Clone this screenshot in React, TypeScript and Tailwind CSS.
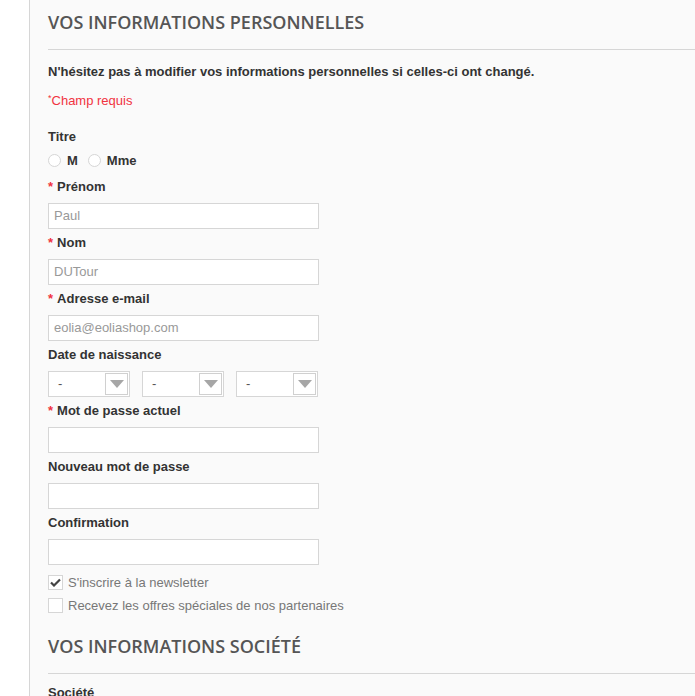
import React from "react";

const sans = { fontFamily: '"Liberation Sans", Arial, sans-serif' };

function Label({ text, required }: { text: string; required?: boolean }) {
  return (
    <div className="h-[18px] leading-[20px] text-[13px] font-bold text-[#333]">
      {required && <span className="text-[#f13340] mr-[4px]">*</span>}
      {text}
    </div>
  );
}

function Field({ label, required, value, first }: { label: string; required?: boolean; value?: string; first?: boolean }) {
  return (
    <div className={first ? "mt-[8px]" : "mt-[4px]"}>
      <Label text={label} required={required} />
      <div className="mt-[8px] h-[26px] w-[271px] border border-[#d6d6d6] bg-white pl-[5px] text-[13px] leading-[24px] text-[#999]">
        {value}
      </div>
    </div>
  );
}

function Select() {
  return (
    <div className="flex h-[26px] w-[82px] items-center justify-between border border-[#d6d6d6] bg-white pl-[9px] pr-[1px]">
      <span className="text-[13px] text-[#555]">-</span>
      <div className="flex h-[22px] w-[23px] items-center justify-center border border-[#d0d0d0] bg-white">
        <svg width="14" height="8" viewBox="0 0 14 8">
          <path d="M0 0h14L7 8z" fill="#a6a6a6" />
        </svg>
      </div>
    </div>
  );
}

function Radio({ label }: { label: string }) {
  return (
    <div className="flex items-center">
      <span className="h-[13px] w-[13px] rounded-full border border-[#d6d6d6] bg-white" />
      <span className="ml-[6px] text-[13px] font-bold text-[#333]">{label}</span>
    </div>
  );
}

function Check({ label, checked }: { label: string; checked?: boolean }) {
  return (
    <div className="flex h-[23px] items-center">
      <span className="flex h-[15px] w-[15px] items-center justify-center border border-[#d6d6d6] bg-white">
        {checked && (
          <svg width="11" height="9" viewBox="0 0 11 9">
            <path d="M1 4.5l3 3L10 1.5" stroke="#444" strokeWidth="2.2" fill="none" />
          </svg>
        )}
      </span>
      <span className="ml-[5px] text-[13px] text-[#777]">{label}</span>
    </div>
  );
}

export default function App() {
  return (
    <div className="flex h-[696px] w-[695px] overflow-hidden bg-white" style={sans}>
      <div className="w-[29px] shrink-0 bg-white" />
      <div className="flex-1 border-l border-[#d6d6d6] bg-[#fafafa]">
        <h1
          className="ml-[18px] pt-[10px] text-[18px] leading-[24px] font-semibold uppercase text-[#555]"
          style={{ fontFamily: '"Open Sans", sans-serif' }}
        >
          Vos informations personnelles
        </h1>
        <div className="ml-[18px] mt-[15px] border-t border-[#d6d6d6]" />
        <div className="pl-[18px]">
          <p className="mt-[12px] h-[18px] leading-[20px] text-[13px] font-bold text-[#333]">
            N'hésitez pas à modifier vos informations personnelles si celles-ci ont changé.
          </p>
          <p className="mt-[11px] h-[18px] leading-[20px] text-[13px] text-[#f13340]">
            <sup className="text-[9px]">*</sup>Champ requis
          </p>
          <div className="mt-[18px]">
            <Label text="Titre" />
          </div>
          <div className="mt-[6px] flex h-[18px] items-center gap-[10px] pt-[1px]">
            <Radio label="M" />
            <Radio label="Mme" />
          </div>
          <Field first label="Prénom" required value="Paul" />
          <Field label="Nom" required value="DUTour" />
          <Field label="Adresse e-mail" required value="eolia@eoliashop.com" />
          <div className="mt-[4px]">
            <Label text="Date de naissance" />
            <div className="mt-[8px] flex gap-[12px]">
              <Select />
              <Select />
              <Select />
            </div>
          </div>
          <Field label="Mot de passe actuel" required />
          <Field label="Nouveau mot de passe" />
          <Field label="Confirmation" />
          <div className="mt-[6px]">
            <Check label="S'inscrire à la newsletter" checked />
            <Check label="Recevez les offres spéciales de nos partenaires" />
          </div>
        </div>
        <h2
          className="ml-[18px] mt-[17px] text-[18px] leading-[24px] font-semibold uppercase text-[#555]"
          style={{ fontFamily: '"Open Sans", sans-serif' }}
        >
          Vos informations société
        </h2>
        <div className="ml-[18px] mt-[15px] border-t border-[#d6d6d6]" />
        <div className="pl-[18px] mt-[9px]">
          <Label text="Société" />
        </div>
      </div>
    </div>
  );
}
